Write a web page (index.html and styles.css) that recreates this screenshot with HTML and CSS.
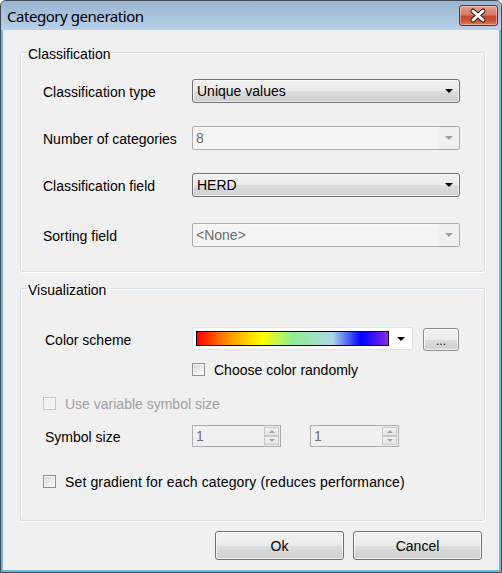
FILE: index.html
```html
<!DOCTYPE html>
<html>
<head>
<meta charset="utf-8">
<title>Category generation</title>
<link rel="stylesheet" href="styles.css">
</head>
<body>
<div class="window">
  <div class="titlebar">
    <span class="title">Category generation</span>
    <div class="close">
      <svg width="39" height="21" viewBox="0 0 39 21">
        <path d="M14 6 L24 15 M24 6 L14 15" stroke="#3b1b17" stroke-width="5" stroke-linecap="round" fill="none"/>
        <path d="M14 6 L24 15 M24 6 L14 15" stroke="#ffffff" stroke-width="3" stroke-linecap="round" fill="none"/>
      </svg>
    </div>
  </div>
  <div class="client">
    <fieldset class="group g1">
      <legend>Classification</legend>
      <div class="gbody g1body">
        <div class="row r-combo">
          <span class="lbl">Classification type</span>
          <div class="combo"><span class="ctext">Unique values</span><span class="arrow"></span></div>
        </div>
        <div class="row r-combo r-gap">
          <span class="lbl">Number of categories</span>
          <div class="combo disabled"><span class="ctext">8</span><span class="arrow"></span></div>
        </div>
        <div class="row r-combo r-gap">
          <span class="lbl">Classification field</span>
          <div class="combo"><span class="ctext">HERD</span><span class="arrow"></span></div>
        </div>
        <div class="row r-combo r-gap2">
          <span class="lbl">Sorting field</span>
          <div class="combo disabled"><span class="ctext">&lt;None&gt;</span><span class="arrow"></span></div>
        </div>
      </div>
    </fieldset>

    <fieldset class="group g2">
      <legend>Visualization</legend>
      <div class="gbody g2body">
        <div class="row v1">
          <span class="lbl lbl2">Color scheme</span>
          <div class="colorcombo"><span class="swatch"></span><span class="arrow"></span></div>
          <div class="btn small">...</div>
        </div>
        <div class="row v2">
          <span class="lbl"></span>
          <span class="check"><span class="box"></span>Choose color randomly</span>
        </div>
        <div class="row v3">
          <span class="check disabled"><span class="box"></span>Use variable symbol size</span>
        </div>
        <div class="row v4">
          <span class="lbl lbl2">Symbol size</span>
          <div class="spin"><span class="stext">1</span><span class="updown"><span class="ud up"></span><span class="ud down"></span></span></div>
          <div class="spin spin2"><span class="stext">1</span><span class="updown"><span class="ud up"></span><span class="ud down"></span></span></div>
        </div>
        <div class="row v5">
          <span class="check wide"><span class="box"></span>Set gradient for each category (reduces performance)</span>
        </div>
      </div>
    </fieldset>

    <div class="buttons">
      <div class="btn big">Ok</div>
      <div class="btn big">Cancel</div>
    </div>
  </div>
</div>
</body>
</html>
```

FILE: styles.css
```css
* { box-sizing: border-box; }
html, body { margin: 0; padding: 0; background: #ffffff; }
body {
  font-family: "Liberation Sans", Arial, sans-serif;
  font-size: 14px;
  color: #000;
}
.window {
  width: 502px;
  height: 573px;
  border: 1px solid #3f4a55;
  border-radius: 6px 6px 0 0;
  background: #6fb6e4;
  display: flex;
  flex-direction: column;
  overflow: hidden;
}
.titlebar {
  height: 29px;
  flex: none;
  background: linear-gradient(to bottom, #99b4d1 0%, #b9d1ea 100%);
  display: flex;
  align-items: flex-start;
  justify-content: space-between;
  padding: 0 3px 0 6px;
}
.title {
  font-family: "Noto Sans", "Open Sans", sans-serif;
  font-size: 15px;
  letter-spacing: -0.45px;
  line-height: 29px;
  padding-top: 1px;
  color: #000;
}
.close {
  margin-top: 4px;
  width: 39px;
  height: 21px;
  border: 1px solid #6b2a24;
  border-radius: 3px;
  background: linear-gradient(to bottom, #e8a08c 0%, #d77a64 45%, #c7472c 55%, #cc5538 80%, #dc7e64 100%);
  box-shadow: inset 0 0 0 1px rgba(255,220,210,0.5);
}
.close svg { display: block; margin: -1px 0 0 -1px; }

.client {
  flex: 1;
  margin: 0 2px 2px 2px;
  background: #f0f0f0;
  display: flex;
  flex-direction: column;
}

.group {
  margin: 0 0 0 17px;
  padding: 0;
  width: 465px;
  border: 1px solid #d5dfe5;
  border-radius: 3px;
  box-shadow: inset 1px 1px 0 #fff, 1px 1px 0 #fff;
  min-inline-size: 0;
}
.g1 { margin-top: 12px; }
.g2 { margin-top: 6px; }
.group legend {
  margin-left: 6px;
  padding: 4px 1px 0 1px;
  line-height: 16px;
  font-size: 14px;
}
.gbody {
  display: flex;
  flex-direction: column;
  padding-left: 22px;
}
.g1body { padding-top: 17px; padding-bottom: 24px; }
.g2body { padding-top: 29px; padding-bottom: 31px; }

.row {
  display: flex;
  align-items: center;
}
.lbl {
  width: 149px;
  flex: none;
  padding-top: 1px;
}
.lbl2 { padding-left: 2px; padding-top: 2px; }
.r-combo { height: 24px; }
.r-gap { margin-top: 23px; }
.r-gap2 { margin-top: 26px; }

.combo {
  width: 268px;
  height: 24px;
  border: 1px solid #707070;
  border-radius: 3px;
  background: linear-gradient(to bottom, #f2f2f2 0%, #ebebeb 50%, #dddddd 51%, #cfcfcf 100%);
  box-shadow: inset 0 0 0 1px rgba(255,255,255,0.6);
  display: flex;
  align-items: center;
  justify-content: space-between;
  padding: 0 5px 0 4px;
}
.combo.disabled {
  border-color: #adadad;
  border-radius: 2px;
  background: #f4f4f4;
  box-shadow: inset -20px 0 0 #f0f0f0, inset 0 0 0 1px #f8f8f8;
  color: #6d6d6d;
  padding-left: 3px;
}
.arrow {
  width: 0;
  height: 0;
  border-left: 4px solid transparent;
  border-right: 4px solid transparent;
  border-top: 4px solid #000;
  margin-right: 1px;
}
.combo.disabled .arrow { border-top-color: #a0a0a0; }

.v1 { height: 24px; align-items: center; }
.colorcombo {
  align-self: flex-start;
  width: 221px;
  height: 23px;
  background: #fff;
  border: 1px solid #e3e3e3;
  display: flex;
  align-items: center;
  padding: 0 6px 0 3px;
  justify-content: space-between;
}
.swatch {
  width: 193px;
  height: 15px;
  border: 1px solid #000;
  background: linear-gradient(to right, #ff0000 0%, #ff9a00 17%, #ffff00 34%, #90ee90 50%, #add8e6 71%, #0000ff 86%, #8a2be2 100%);
}
.btn {
  border: 1px solid #707070;
  border-radius: 3px;
  background: linear-gradient(to bottom, #f2f2f2 0%, #ebebeb 50%, #dddddd 51%, #cfcfcf 100%);
  box-shadow: inset 0 0 0 1px rgba(255,255,255,0.7);
  display: flex;
  align-items: center;
  justify-content: center;
}
.btn.small {
  align-self: flex-end;
  margin-left: 10px;
  width: 36px;
  height: 23px;
  border-color: #8c8c8c;
  font-size: 12px;
  padding-top: 2px;
}
.v2 { height: 16px; margin-top: 10px; }
.v3 { height: 16px; margin-top: 18px; }
.v4 { height: 22px; margin-top: 14px; }
.v5 { height: 16px; margin-top: 26px; }

.check {
  display: flex;
  align-items: center;
  padding-top: 1px;
}
.check.wide { letter-spacing: 0.13px; }
.box {
  width: 13px;
  height: 13px;
  border: 1px solid #8e8f8f;
  background: linear-gradient(135deg, #cfd2d6 0%, #f3f3f3 70%, #fbfbfb 100%);
  box-shadow: inset 0 0 0 1px #f4f4f4;
  margin-right: 9px;
  margin-top: -1px;
  flex: none;
}
.check.disabled { color: #a0a0a0; }
.check.disabled .box {
  border-color: #c5c5c5;
  background: #f2f2f2;
  box-shadow: inset 0 0 0 1px #f8f8f8;
}

.spin {
  width: 89px;
  height: 22px;
  border: 1px solid #adadad;
  background: #f0f0f0;
  display: flex;
  align-items: center;
  justify-content: space-between;
  padding: 1px 1px 1px 3px;
  color: #6d6d6d;
}
.spin2 { margin-left: 29px; }
.updown {
  width: 15px;
  height: 18px;
  display: flex;
  flex-direction: column;
  align-self: center;
}
.ud {
  flex: 1;
  border: 1px solid #c8c8c8;
  background: linear-gradient(to bottom, #f4f4f4, #e4e4e4);
  display: flex;
  align-items: center;
  justify-content: center;
}
.ud::after {
  content: "";
  width: 0;
  height: 0;
  border-left: 3px solid transparent;
  border-right: 3px solid transparent;
}
.ud.up::after { border-bottom: 3px solid #a3a3a3; }
.ud.down::after { border-top: 3px solid #a3a3a3; }

.buttons {
  display: flex;
  justify-content: flex-end;
  gap: 9px;
  margin-top: 10px;
  padding-right: 17px;
}
.btn.big {
  width: 129px;
  height: 29px;
  padding-top: 1px;
}
```
